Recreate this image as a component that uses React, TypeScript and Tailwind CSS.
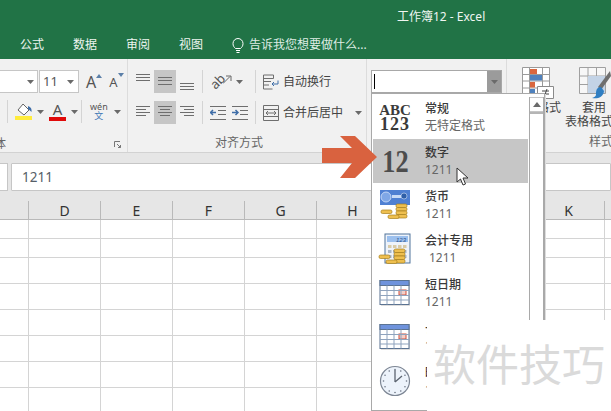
import React from "react";

const GROUP_LABEL = "text-[12px] leading-[14px] text-[#666666]";

const Caret = ({ className = "" }: { className?: string }) => (
  <svg width="7" height="4" viewBox="0 0 7 4" className={className}>
    <path d="M0 0h7L3.5 4z" fill="#6a6a6a" />
  </svg>
);

const Lines = ({ ys, widths, align = "left" }: { ys: number[]; widths?: number[]; align?: "left" | "center" | "right" }) => (
  <svg width="22" height="23" viewBox="0 0 22 23">
    {ys.map((y, i) => {
      const w = widths ? widths[i] : 14;
      const x = align === "left" ? 4 : align === "center" ? 11 - w / 2 : 18 - w;
      return <rect key={i} x={x} y={y} width={w} height="1" fill="#6e6e6e" />;
    })}
  </svg>
);

const CalendarIcon = () => (
  <svg width="32" height="28" viewBox="0 0 32 28">
    <rect x="2" y="3" width="29" height="24" fill="#a9a9a9" opacity="0.4" />
    <rect x="1" y="1.5" width="29" height="24" fill="#fff" stroke="#5b7392" />
    <rect x="1" y="1.5" width="29" height="5" fill="#6f93dc" stroke="#5b7392" />
    <rect x="20" y="11" width="7" height="5" fill="#f4cfc8" stroke="#cf4f3d" />
    <path d="M8 6.500v19M15 6.500v19M22 6.500v19M1 11.500h29M1 16.500h29M1 21h29" stroke="#8fa3bd" fill="none" />
  </svg>
);

const Coins = ({ x, y }: { x: number; y: number }) => (
  <g transform={`translate(${x} ${y})`} stroke="#a77f1c" strokeWidth="0.7" fill="#eebf4f">
    <rect x="16" y="0" width="11" height="3.500" rx="1.500" />
    <rect x="16" y="3.500" width="11" height="3.500" rx="1.500" />
    <rect x="16" y="7" width="11" height="3.500" rx="1.500" />
    <rect x="16" y="10.500" width="11" height="3.500" rx="1.500" />
    <rect x="8" y="11" width="11" height="3.500" rx="1.500" />
    <rect x="1" y="6" width="11" height="3.500" rx="1.500" />
  </g>
);

const CurrencyIcon = () => (
  <svg width="32" height="30" viewBox="0 0 32 30">
    <rect x="1" y="0" width="30" height="15" fill="#4f80d2" />
    <circle cx="7" cy="7" r="5" fill="#7fa7e6" stroke="#d5e3fa" strokeWidth="0.8" />
    <rect x="13" y="5" width="9" height="3" fill="#c9dbf6" />
    <circle cx="25" cy="6" r="3" fill="#2f5fa8" stroke="#d5e3fa" strokeWidth="0.6" />
    <Coins x={1} y={14} />
  </svg>
);

const AccountingIcon = () => (
  <svg width="36" height="33" viewBox="0 0 36 33">
    <rect x="8" y="1" width="25" height="29" fill="#eef3fa" stroke="#51749c" />
    <rect x="10" y="3" width="21" height="6" fill="#9cc0ee" />
    <text x="19" y="8.500" fontSize="6" fontStyle="italic" fill="#28508c" fontFamily="Liberation Sans, sans-serif">123</text>
    {[0, 1, 2, 3].map((c) =>
      [0, 1, 2].map((r) => (
        <rect key={`${c}-${r}`} x={11 + c * 5} y={12 + r * 5} width="3.500" height="3" fill={r === 0 ? "#d8cba8" : "#a8b6c8"} />
      )),
    )}
    <Coins x={1} y={16} />
  </svg>
);

const ClockIcon = () => (
  <svg width="32" height="32" viewBox="0 0 32 32">
    <circle cx="16" cy="16" r="14.500" fill="#edf3fb" stroke="#7d8694" strokeWidth="1.200" />
    {[0, 30, 60, 90, 120, 150, 180, 210, 240, 270, 300, 330].map((a) => (
      <circle key={a} cx={16 + 11.500 * Math.sin((a * Math.PI) / 180)} cy={16 - 11.500 * Math.cos((a * Math.PI) / 180)} r="0.800" fill="#6b7483" />
    ))}
    <path d="M16 17V5M16 17l7-6" stroke="#5c6470" strokeWidth="1.300" fill="none" />
  </svg>
);

const formats = [
  {
    title: "常规",
    sub: "无特定格式",
    icon: (
      <div className="flex flex-col items-center font-['Liberation_Serif',serif] font-bold text-[#3a3a3a] text-[15px] leading-[14px]">
        <span>ABC</span>
        <span className="text-[18px] leading-[15px] tracking-[1px]">123</span>
      </div>
    ),
  },
  {
    title: "数字",
    sub: "1211",
    active: true,
    icon: <span className="font-['Liberation_Serif',serif] font-bold text-[31px] leading-none text-[#4d4d4d] scale-x-[0.85]">12</span>,
  },
  { title: "货币", sub: "1211", icon: <CurrencyIcon /> },
  { title: "会计专用", sub: "1211", indent: true, icon: <AccountingIcon /> },
  { title: "短日期", sub: "1211", icon: <CalendarIcon /> },
  { title: "长日期", sub: "1211", icon: <CalendarIcon /> },
  { title: "时间", sub: "1211", icon: <ClockIcon /> },
];

const columns = ["", "", "D", "E", "F", "G", "H", "I", "J", "K", "L"];
const rowHeights = ["h-[19px]", "h-[19px]", "h-[26px]", "h-[26px]", "h-[26px]", "h-[26px]", "h-[26px]", "h-[26px]"];

const GridRow = ({ height, header }: { height: string; header?: boolean }) => (
  <div className={`flex ${height} border-b ${header ? "border-[#b9b9b9]" : "border-[#d4d4d4]"}`}>
    {columns.slice(1).map((c, i) => (
      <div
        key={i}
        className={`shrink-0 flex items-center justify-center border-r ${header ? "border-[#b9b9b9] text-[14px] text-[#333333]" : "border-[#d4d4d4]"} ${i === 0 ? "w-[29px]" : "w-[72px]"}`}
      >
        {header ? c : null}
      </div>
    ))}
  </div>
);

export default function App() {
  return (
    <div className="relative w-[611px] h-[411px] overflow-hidden bg-white font-['Noto_Sans','Noto_Sans_CJK_SC',sans-serif]">
      {/* title bar + tabs */}
      <div className="h-[59px] bg-[#217346] text-white flex flex-col">
        <div className="h-[36px] pt-[9px] pl-[397px] text-[12px] leading-[16px] text-[#f0f6f2] whitespace-nowrap">工作簿12 - Excel</div>
        <div className="flex items-center h-[18px] text-[12px] text-[#eef5f0] pl-[20px]">
          <span className="w-[53px]">公式</span>
          <span className="w-[53px]">数据</span>
          <span className="w-[53px]">审阅</span>
          <span className="w-[53px]">视图</span>
          <svg width="12" height="15" viewBox="0 0 12 15" className="mr-[5px]">
            <path d="M3.500 10.500C2 9 1 8 1 5.500a5 5 0 0 1 10 0C11 8 10 9 8.500 10.500zM4 12.500h4M4.500 14.500h3" stroke="#fff" fill="none" />
          </svg>
          <span className="whitespace-nowrap text-[#dfece4]">告诉我您想要做什么...</span>
        </div>
      </div>

      {/* ribbon */}
      <div className="flex h-[94px] bg-[#f1f1f1] border-b border-[#d2d2d2] text-[#444444]">
        {/* font group */}
        <div className="w-[128px] shrink-0 border-r border-[#dcdcdc] flex flex-col pt-[11px]">
          <div className="flex items-center h-[23px]">
            <div className="w-[38px] h-[23px] bg-white border-y border-r border-[#c6c6c6] flex items-center justify-end pr-[3px]">
              <Caret />
            </div>
            <div className="ml-[1px] w-[40px] h-[23px] bg-white border border-[#c6c6c6] flex items-center justify-between pl-[3px] pr-[4px] text-[13px] text-[#555555]">
              11
              <Caret />
            </div>
            <span className="ml-[7px] text-[16px] text-[#555555] leading-none">A</span>
            <svg width="6" height="4" viewBox="0 0 6 4" className="mb-[11px]"><path d="M0 4h6L3 0z" fill="#5b7fa8" /></svg>
            <span className="ml-[7px] text-[13px] text-[#555555] leading-none mt-[2px]">A</span>
            <svg width="6" height="4" viewBox="0 0 6 4" className="mb-[13px]"><path d="M0 0h6L3 4z" fill="#5b7fa8" /></svg>
          </div>
          <div className="flex items-center h-[23px] mt-[7px]">
            <div className="w-px h-[23px] bg-[#d4d4d4] ml-[7px]" />
            <svg width="18" height="18" viewBox="0 0 18 18" className="ml-[7px]">
              <path d="M8 1l6 6-5 5-6-5z" fill="#fff" stroke="#666666" />
              <path d="M13 3c3 1 4 3 3.500 6-1-1-2-2-3.500-3z" fill="#3f6ea8" />
              <rect x="0" y="13" width="17" height="4" fill="#ffec3d" />
            </svg>
            <Caret className="ml-[4px]" />
            <div className="ml-[5px] w-[17px] h-[19px] flex flex-col items-center">
              <span className="text-[15px] leading-[14px] text-[#555555]">A</span>
              <div className="w-[17px] h-[4px] mt-[1px] bg-[#e00a0a]" />
            </div>
            <Caret className="ml-[5px]" />
            <div className="w-px h-[23px] bg-[#d4d4d4] ml-[3px]" />
            <div className="ml-[8px] flex flex-col items-center">
              <span className="text-[9px] leading-[9px] text-[#555555]">wén</span>
              <span className="text-[9px] leading-[10px] text-[#3f78b5]">文</span>
            </div>
            <Caret className="ml-[6px]" />
          </div>
          <div className={`${GROUP_LABEL} mt-[14px] flex justify-between items-center pr-[6px]`}>
            <span className="-ml-[6px]">体</span>
            <svg width="7" height="7" viewBox="0 0 7 7"><path d="M.500 6V.500H6M3 3l3.500 3.500M6.500 4v2.500H4" stroke="#777777" fill="none" /></svg>
          </div>
        </div>

        {/* alignment group */}
        <div className="w-[239px] shrink-0 border-r border-[#dcdcdc] flex flex-col pt-[11px] pl-[4px]">
          <div className="flex h-[23px]">
            <div className="w-[22px]"><Lines ys={[4, 7, 10]} /></div>
            <div className="w-[22px] bg-[#c6c6c6]"><Lines ys={[7, 10, 14]} /></div>
            <div className="w-[22px]"><Lines ys={[13, 16, 19]} /></div>
            <div className="w-px bg-[#d4d4d4] ml-[4px]" />
            <div className="w-[52px] flex items-center pl-[7px]">
              <span className="text-[13px] leading-none text-[#555555] -rotate-45">ab</span>
              <svg width="9" height="9" viewBox="0 0 9 9" className="-ml-[2px] mb-[4px]"><path d="M0 8.500l7-7M3 1h5v5" stroke="#666666" fill="none" /></svg>
              <Caret className="ml-[4px]" />
            </div>
            <div className="w-px bg-[#d4d4d4]" />
            <div className="flex items-center pl-[7px] gap-[4px] text-[12px] whitespace-nowrap">
              <svg width="16" height="16" viewBox="0 0 16 16">
                <path d="M.500 1h10v3.500H.500zM.500 7.500H8M.500 11H6M.500 15V1M.500 15h9" stroke="#6e6e6e" fill="none" />
                <path d="M15 6.500v3.500H9M11 8l-2 2 2 2" stroke="#3f6ea8" fill="none" />
              </svg>
              自动换行
            </div>
          </div>
          <div className="flex h-[23px] mt-[8px]">
            <div className="w-[22px]"><Lines ys={[5, 8, 11, 14]} widths={[14, 10, 14, 10]} /></div>
            <div className="w-[22px] bg-[#c6c6c6]"><Lines ys={[5, 8, 11, 14]} widths={[14, 10, 14, 10]} align="center" /></div>
            <div className="w-[22px]"><Lines ys={[5, 8, 11, 14]} widths={[14, 10, 14, 10]} align="right" /></div>
            <div className="w-px bg-[#d4d4d4] ml-[4px]" />
            <div className="w-[52px] flex items-center pl-[7px] gap-[6px]">
              <svg width="16" height="14" viewBox="0 0 16 14">
                <path d="M0 .500h16M8 4.500h8M8 8.500h8M0 13.500h16" stroke="#6e6e6e" fill="none" />
                <path d="M0 6.500h6M3 4L.500 6.500 3 9" stroke="#3f6ea8" strokeWidth="1.500" fill="none" />
              </svg>
              <svg width="16" height="14" viewBox="0 0 16 14">
                <path d="M0 .500h16M8 4.500h8M8 8.500h8M0 13.500h16" stroke="#6e6e6e" fill="none" />
                <path d="M0 6.500h6M3.500 4L6 6.500 3.500 9" stroke="#3f6ea8" strokeWidth="1.500" fill="none" />
              </svg>
            </div>
            <div className="w-px bg-[#d4d4d4]" />
            <div className="flex items-center pl-[7px] gap-[4px] text-[12px] whitespace-nowrap">
              <svg width="16" height="16" viewBox="0 0 16 16">
                <path d="M.500.500h15v15H.500zM.500 4.500h15M.500 11.500h15" stroke="#6e6e6e" fill="none" />
                <path d="M3 8h10M5 6L3 8l2 2M11 6l2 2-2 2" stroke="#6e6e6e" fill="none" />
              </svg>
              合并后居中
              <Caret className="ml-[8px]" />
            </div>
          </div>
          <div className={`${GROUP_LABEL} mt-[12px] pl-[83px]`}>对齐方式</div>
        </div>

        {/* number group, combo on top of the list */}
        <div className="w-[140px] shrink-0 border-r border-[#dcdcdc] pt-[11px] pl-[4px]">
          <div className="flex w-[131px] h-[23px] border border-[#a8a8a8] bg-white">
            <div className="flex-1 flex items-center pl-[2px]">
              <div className="w-px h-[15px] bg-black" />
            </div>
            <div className="w-[14px] bg-[#9b9b9b] flex items-center justify-center">
              <Caret />
            </div>
          </div>
        </div>

        {/* styles group */}
        <div className="flex-1 flex flex-col pt-[8px] pl-[6px] overflow-hidden">
          <div className="flex h-[67px] text-[12px] leading-[14px] text-center">
            <div className="w-[48px] shrink-0 flex flex-col items-center">
              <svg width="32" height="32" viewBox="0 0 32 32" className="mb-[2px] ml-[2px]">
                <path d="M.500.500h27v27H.500zM7.500.500v27M20.500.500v27M.500 7.500h27M.500 14h27M.500 21h27" stroke="#9a9a9a" fill="#fff" />
                <rect x="8" y="2" width="7" height="5" fill="#d9673f" />
                <rect x="8" y="8" width="12" height="5.500" fill="#4f81bd" />
                <rect x="8" y="15" width="5" height="5.500" fill="#d9673f" />
                <rect x="8" y="22" width="5" height="5.500" fill="#4f81bd" />
                <path d="M15.500 19.500h16v12h-16z" fill="#fff" stroke="#8a8a8a" />
                <path d="M20 24h7M20 27h7M25 22l-3 8" stroke="#444444" fill="none" />
              </svg>
              条件格式
            </div>
            <div className="ml-[4px] w-[58px] shrink-0 flex flex-col items-center whitespace-nowrap">
              <svg width="32" height="32" viewBox="0 0 32 32" className="mb-[2px] ml-[2px]">
                <path d="M.500.500h26v26H.500zM9 .500v26M17.500.500v26M.500 9h26M.500 17.500h26" stroke="#a0a0a0" fill="#f7f7f7" />
                <rect x="9" y="9" width="17" height="17" fill="#c3d3e6" />
                <path d="M31 4L19 20l3 3L32 9z" fill="#6f6f6f" />
                <path d="M22 20c-4 0-5 3-5 7 0 3-2 3-4 4 5 1 11 0 12-7z" fill="#2f7ec2" />
              </svg>
              <span>套用</span>
              <span className="flex items-center gap-[3px]">表格格式<Caret /></span>
            </div>
          </div>
          <div className={`${GROUP_LABEL} pl-[76px] whitespace-nowrap mt-[1px]`}>样式</div>
        </div>
      </div>

      {/* formula bar */}
      <div className="h-[48px] bg-[#e6e6e6] pt-[10px] flex gap-[3px]">
        <div className="w-[8px] h-[28px] bg-white border-y border-r border-[#c6c6c6]" />
        <div className="flex-1 h-[28px] bg-white border border-[#c6c6c6] rounded-[1px] flex items-center pl-[10px] text-[13.500px] text-[#566068]">1211</div>
      </div>

      {/* sheet */}
      <div className="bg-[#e6e6e6]">
        <GridRow height="h-[19px]" header />
      </div>
      {rowHeights.map((h, i) => (
        <GridRow key={i} height={h} />
      ))}

      {/* number format dropdown */}
      <div className="absolute left-[371px] top-[93px] w-[174px] h-[318px] bg-white border border-[#a9a9a9] shadow-[1px_1px_0_#dddddd] flex">
        <div className="w-[157px] shrink-0 pt-px pl-px">
          {formats.map((f) => (
            <div key={f.title} className={`flex h-[44px] w-[155px] ${f.active ? "bg-[#c6c6c6]" : ""}`}>
              <div className="w-[44px] shrink-0 flex items-center justify-center">{f.icon}</div>
              <div className="pl-[8px] pt-[5px] text-[12px] leading-[17px] whitespace-nowrap">
                <div className="text-[#3a3a3a] font-medium">{f.title}</div>
                <div className={`text-[#666666] ${f.indent ? "pl-[4px]" : ""}`}>{f.sub}</div>
              </div>
            </div>
          ))}
        </div>
        <div className="flex-1 flex flex-col border-x border-[#a9a9a9] mt-[3px] min-w-0">
          <div className="h-[15px] border-y border-[#c6c6c6] flex items-center justify-center">
            <svg width="8" height="5" viewBox="0 0 8 5"><path d="M0 5h8L4 0z" fill="#6a6a6a" /></svg>
          </div>
          <div className="flex-1 border-t-2 border-[#b5b5b5]" />
        </div>
      </div>

      {/* callout arrow */}
      <svg width="56" height="44" viewBox="0 0 56 44" className="absolute left-[322px] top-[135px]">
        <path d="M18 1h15l22 21-22 21H18l12-15H0V13h30z" fill="#d9623f" />
      </svg>

      {/* mouse pointer */}
      <svg width="14" height="20" viewBox="0 0 14 20" className="absolute left-[456px] top-[167px]">
        <path d="M1 1v14l3.500-3 2.500 6 2.500-1-2.500-6H12z" fill="#fff" stroke="#333333" strokeLinejoin="round" />
      </svg>

      {/* watermark */}
      <div className="absolute left-[427px] top-[320px] right-0 bottom-0 bg-white pl-[6px] pt-[15px] text-[43px] leading-[60px] text-[#dadada] whitespace-nowrap">
        软件技巧
      </div>
    </div>
  );
}
